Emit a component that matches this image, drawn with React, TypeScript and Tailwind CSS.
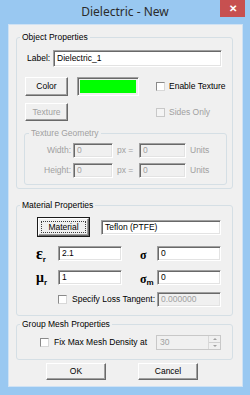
import React from "react";

function ClassicButton({label, w, h, disabled, isDefault}: {label: string, w: string, h: string, disabled?: boolean, isDefault?: boolean}) {
    if (isDefault) {
        return (
            <div className={`${w} ${h} border border-[#1a1a1a] bg-[#f0f0f0] flex`}>
                <div className="flex-1 border-t border-l border-white border-r border-b border-r-[#696969] border-b-[#696969] shadow-[inset_-1px_-1px_0_#a0a0a0] flex p-[2px]">
                    <div className="flex-1 border border-dotted border-[#3c3c3c] flex items-center justify-center leading-none">{label}</div>
                </div>
            </div>
        )
    }
    return (
        <div className={`${w} ${h} bg-[#f0f0f0] border-t border-l border-white border-r border-b border-r-[#696969] border-b-[#696969] shadow-[inset_-1px_-1px_0_#a0a0a0] flex items-center justify-center leading-none ${disabled ? "text-[#a0a0a0]" : ""}`}>
            {label}
        </div>
    )
}

function Field({value, w, disabled}: {value: string, w: string, disabled?: boolean}) {
    return (
        <div className={`${w} h-[15px] border border-t-[#a0a0a0] border-l-[#a0a0a0] border-r-white border-b-white shadow-[inset_1px_1px_0_#696969,inset_-1px_-1px_0_#e3e3e3] flex items-center pl-[3px] leading-none ${disabled ? "bg-[#f0f0f0] text-[#a0a0a0]" : "bg-white"}`}>
            {value}
        </div>
    )
}

function Check({disabled}: {disabled?: boolean}) {
    return (
        <div className={`w-[9px] h-[9px] shrink-0 border ${disabled ? "border-[#c8c8c8] bg-[#f4f4f4]" : "border-t-[#8a8a8a] border-l-[#8a8a8a] border-r-[#d8d8d8] border-b-[#d8d8d8] bg-white"}`}/>
    )
}

function Group({title, className, children}: {title: string, className: string, children: React.ReactNode}) {
    return (
        <fieldset className={`${className} border border-[#d5dfe5] rounded-[3px] m-0 p-0 min-w-0`}>
            <legend className="ml-[3px] px-[2px] h-[12px] leading-[12px]">{title}</legend>
            {children}
        </fieldset>
    )
}

function Greek({sym, sub, size}: {sym: string, sub: string, size: string}) {
    return (
        <span className="flex items-end font-['Liberation_Serif',serif] font-bold leading-none">
            <span className={size}>{sym}</span>
            <span className="text-[8px] font-['Liberation_Sans',sans-serif] mb-[-2px]">{sub}</span>
        </span>
    )
}

export default function App() {
    return (
        <div className="w-[250px] h-[395px] bg-[#99c8f1] flex flex-col font-['Liberation_Sans',Arial,sans-serif] text-[8.5px] text-black">
            <div className="h-[24px] relative flex items-center justify-center">
                <span className="text-[12px] text-[#2b2b2b] font-['Noto_Sans',sans-serif] mt-[-1px]">Dielectric - New</span>
                <div className="absolute right-[5px] top-0 w-[25px] h-[17px] bg-[#c75050] flex items-center justify-center text-white text-[10px] font-bold leading-none">✕</div>
            </div>
            <div className="ml-[8px] mr-[7px] mb-[8px] flex-1 bg-[#f0f0f0] border border-[#cfe2f4] flex flex-col">
                <Group title="Object Properties" className="mt-[6px] ml-[7px] w-[217px] h-[158px]">
                    <div className="mt-[7px] h-[17px] flex items-center pl-[10px]">
                        <span className="w-[26px]">Label:</span>
                        <div className="w-[169px] h-[17px] bg-white border border-t-[#a0a0a0] border-l-[#a0a0a0] border-r-white border-b-white shadow-[inset_1px_1px_0_#696969,inset_-1px_-1px_0_#e3e3e3] flex items-center pl-[3px]">Dielectric_1</div>
                    </div>
                    <div className="mt-[10px] h-[19px] flex items-center">
                        <div className="ml-[8px]"><ClassicButton label="Color" w="w-[43px]" h="h-[19px]"/></div>
                        <div className="ml-[9px] w-[62px] h-[19px] border border-t-[#a0a0a0] border-l-[#a0a0a0] border-r-white border-b-white shadow-[inset_1px_1px_0_#696969] p-[2px] bg-[#f0f0f0]">
                            <div className="w-full h-full bg-[#00ff00]"/>
                        </div>
                        <div className="ml-[17px] flex items-center">
                            <Check/>
                            <span className="ml-[4px]">Enable Texture</span>
                        </div>
                    </div>
                    <div className="mt-[7px] h-[18px] flex items-center">
                        <div className="ml-[8px]"><ClassicButton label="Texture" w="w-[43px]" h="h-[18px]" disabled/></div>
                        <div className="ml-[88px] flex items-center text-[#a0a0a0]">
                            <Check disabled/>
                            <span className="ml-[4px]">Sides Only</span>
                        </div>
                    </div>
                    <fieldset className="mt-[6px] ml-[7px] w-[203px] h-[58px] border border-[#d5dfe5] rounded-[3px] p-0 min-w-0 text-[#a0a0a0]">
                        <legend className="ml-[4px] px-[2px] h-[12px] leading-[12px]">Texture Geometry</legend>
                        <div className="mt-[4px] h-[15px] flex items-center">
                            <span className="w-[46px] text-right">Width:</span>
                            <div className="ml-[2px]"><Field value="0" w="w-[40px]" disabled/></div>
                            <span className="ml-[4px] w-[22px]">px =</span>
                            <Field value="0" w="w-[47px]" disabled/>
                            <span className="ml-[4px]">Units</span>
                        </div>
                        <div className="mt-[5px] h-[15px] flex items-center">
                            <span className="w-[46px] text-right">Height:</span>
                            <div className="ml-[2px]"><Field value="0" w="w-[40px]" disabled/></div>
                            <span className="ml-[4px] w-[22px]">px =</span>
                            <Field value="0" w="w-[47px]" disabled/>
                            <span className="ml-[4px]">Units</span>
                        </div>
                    </fieldset>
                </Group>

                <Group title="Material Properties" className="mt-[10px] ml-[7px] w-[217px] h-[117px]">
                    <div className="mt-[6px] h-[20px] flex items-center">
                        <div className="ml-[20px]"><ClassicButton label="Material" w="w-[53px]" h="h-[20px]" isDefault/></div>
                        <div className="ml-[11px]"><Field value="Teflon (PTFE)" w="w-[120px]"/></div>
                    </div>
                    <div className="mt-[9px] h-[15px] flex items-center">
                        <div className="ml-[19px] w-[22px]"><Greek sym="ε" sub="r" size="text-[16px]"/></div>
                        <Field value="2.1" w="w-[64px]"/>
                        <div className="ml-[18px] w-[17px] pt-[2px]"><Greek sym="σ" sub="" size="text-[12px]"/></div>
                        <Field value="0" w="w-[64px]"/>
                    </div>
                    <div className="mt-[9px] h-[15px] flex items-center">
                        <div className="ml-[19px] w-[22px]"><Greek sym="μ" sub="r" size="text-[14px]"/></div>
                        <Field value="1" w="w-[64px]"/>
                        <div className="ml-[18px] w-[17px] pt-[2px]"><Greek sym="σ" sub="m" size="text-[12px]"/></div>
                        <Field value="0" w="w-[64px]"/>
                    </div>
                    <div className="mt-[7px] h-[15px] flex items-center">
                        <div className="ml-[41px]"><Check/></div>
                        <span className="ml-[5px] w-[85px]">Specify Loss Tangent:</span>
                        <Field value="0.000000" w="w-[64px]" disabled/>
                    </div>
                </Group>

                <Group title="Group Mesh Properties" className="mt-[2px] ml-[7px] w-[217px] h-[42px]">
                    <div className="mt-[5px] h-[15px] flex items-center">
                        <div className="ml-[23px]"><Check/></div>
                        <span className="ml-[5px] w-[102px]">Fix Max Mesh Density at</span>
                        <div className="w-[65px] h-[15px] border border-[#c8c8c8] bg-[#f0f0f0] flex text-[#a0a0a0]">
                            <span className="flex-1 pl-[3px] flex items-center leading-none">30</span>
                            <div className="w-[12px] flex flex-col border-l border-[#d8d8d8]">
                                <div className="flex-1 flex items-center justify-center border-b border-[#d0d0d0]">
                                    <span className="w-0 h-0 border-l-[2px] border-r-[2px] border-b-[2px] border-l-transparent border-r-transparent border-b-[#a0a0a0]"/>
                                </div>
                                <div className="flex-1 flex items-center justify-center">
                                    <span className="w-0 h-0 border-l-[2px] border-r-[2px] border-t-[2px] border-l-transparent border-r-transparent border-t-[#a0a0a0]"/>
                                </div>
                            </div>
                        </div>
                    </div>
                </Group>

                <div className="mt-[3px] h-[17px] flex">
                    <div className="ml-[37px]"><ClassicButton label="OK" w="w-[60px]" h="h-[17px]"/></div>
                    <div className="ml-[32px]"><ClassicButton label="Cancel" w="w-[60px]" h="h-[17px]"/></div>
                </div>
            </div>
        </div>
    )
}
